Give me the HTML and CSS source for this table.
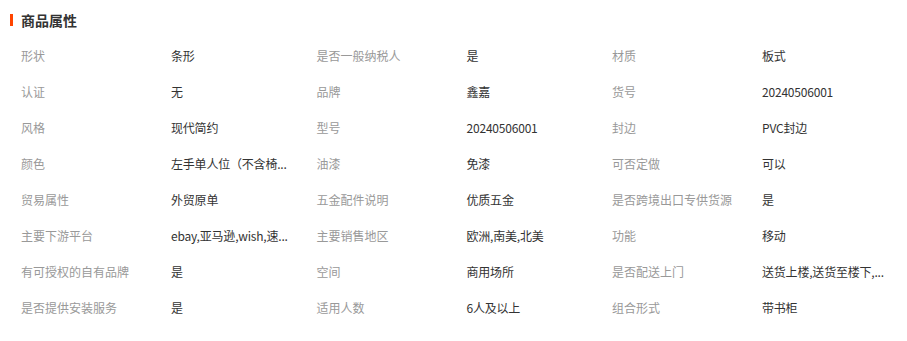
FILE: index.html
```html
<!DOCTYPE html>
<html lang="zh">
<head>
<meta charset="utf-8">
<link rel="stylesheet" href="styles.css">
</head>
<body>
<div class="panel">
  <h2 class="title">商品属性</h2>
  <div class="grid">
    <div class="attr"><span class="k">形状</span><span class="v">条形</span></div>
    <div class="attr"><span class="k">是否一般纳税人</span><span class="v">是</span></div>
    <div class="attr"><span class="k">材质</span><span class="v">板式</span></div>
    <div class="attr"><span class="k">认证</span><span class="v">无</span></div>
    <div class="attr"><span class="k">品牌</span><span class="v">鑫嘉</span></div>
    <div class="attr"><span class="k">货号</span><span class="v">20240506001</span></div>
    <div class="attr"><span class="k">风格</span><span class="v">现代简约</span></div>
    <div class="attr"><span class="k">型号</span><span class="v">20240506001</span></div>
    <div class="attr"><span class="k">封边</span><span class="v">PVC封边</span></div>
    <div class="attr"><span class="k">颜色</span><span class="v">左手单人位（不含椅...</span></div>
    <div class="attr"><span class="k">油漆</span><span class="v">免漆</span></div>
    <div class="attr"><span class="k">可否定做</span><span class="v">可以</span></div>
    <div class="attr"><span class="k">贸易属性</span><span class="v">外贸原单</span></div>
    <div class="attr"><span class="k">五金配件说明</span><span class="v">优质五金</span></div>
    <div class="attr"><span class="k">是否跨境出口专供货源</span><span class="v">是</span></div>
    <div class="attr"><span class="k">主要下游平台</span><span class="v">ebay,亚马逊,wish,速...</span></div>
    <div class="attr"><span class="k">主要销售地区</span><span class="v">欧洲,南美,北美</span></div>
    <div class="attr"><span class="k">功能</span><span class="v">移动</span></div>
    <div class="attr"><span class="k">有可授权的自有品牌</span><span class="v">是</span></div>
    <div class="attr"><span class="k">空间</span><span class="v">商用场所</span></div>
    <div class="attr"><span class="k">是否配送上门</span><span class="v">送货上楼,送货至楼下,...</span></div>
    <div class="attr"><span class="k">是否提供安装服务</span><span class="v">是</span></div>
    <div class="attr"><span class="k">适用人数</span><span class="v">6人及以上</span></div>
    <div class="attr"><span class="k">组合形式</span><span class="v">带书柜</span></div>
  </div>
</div>
</body>
</html>
```
FILE: styles.css
```css
* { box-sizing: border-box; }
html, body { margin: 0; padding: 0; background: #fff; }
body {
  font-family: "Microsoft YaHei", "Noto Sans CJK SC", "Noto Sans", sans-serif;
  color: #333;
}
.panel { padding: 10px 0 0 10px; }
.title {
  margin: 0;
  display: flex;
  align-items: center;
  font-size: 14px;
  font-weight: bold;
  line-height: 20px;
  color: #333;
}
.title::before {
  content: "";
  display: block;
  width: 3px;
  height: 12px;
  background: #ff4400;
  margin-right: 8px;
}
.grid {
  display: grid;
  grid-template-columns: repeat(3, 295.5px);
  padding: 8px 0 0 11px;
}
.attr {
  display: flex;
  height: 36px;
  align-items: center;
  font-size: 12px;
  line-height: 18px;
}
.k {
  width: 150px;
  flex: none;
  color: #999;
  white-space: nowrap;
}
.v {
  width: 140px;
  flex: none;
  color: #333;
  white-space: nowrap;
  letter-spacing: -0.2px;
}
```
